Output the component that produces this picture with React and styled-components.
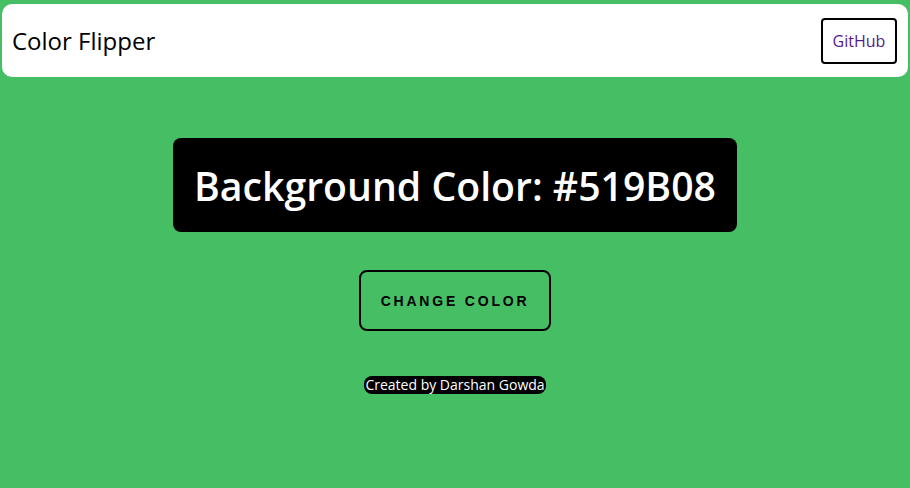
import React from "react";
import styled, { createGlobalStyle } from "styled-components";

const GlobalStyle = createGlobalStyle`
  html, body {
    margin: 0;
    padding: 0;
    background: #46be63;
    font-family: "Open Sans", sans-serif;
  }
`;

const Page = styled.div`
  min-height: 488px;
  padding: 4px 2px 0;
  box-sizing: border-box;
  display: flex;
  flex-direction: column;
  align-items: center;
`;

const Nav = styled.nav`
  align-self: stretch;
  height: 73px;
  background: #fff;
  border-radius: 10px;
  display: flex;
  align-items: center;
  justify-content: space-between;
  padding: 0 11px 0 10px;
`;

const Brand = styled.h1`
  margin: 0;
  font-size: 24px;
  font-weight: 400;
  color: #000;
`;

const GitLink = styled.a`
  display: flex;
  align-items: center;
  justify-content: center;
  width: 72px;
  height: 42px;
  border: 2px solid #000;
  border-radius: 4px;
  color: #551a8b;
  font-size: 16px;
  text-decoration: none;
`;

const ColorBox = styled.h2`
  margin: 61px 0 0;
  padding: 0 21px;
  height: 94px;
  display: flex;
  align-items: center;
  background: #000;
  color: #fff;
  border-radius: 8px;
  font-size: 39.2px;
  font-weight: 600;
`;

const ChangeBtn = styled.button`
  margin-top: 38px;
  width: 192px;
  height: 61px;
  background: transparent;
  border: 2px solid #000;
  border-radius: 8px;
  font-family: "Liberation Sans", Arial, sans-serif;
  font-size: 14px;
  font-weight: 700;
  letter-spacing: 2.8px;
  color: #000;
  cursor: pointer;
`;

const Credit = styled.p`
  margin: 45px 0 0;
  padding: 0 1px;
  background: #000;
  color: #fff;
  border-radius: 8px;
  font-size: 14px;
  line-height: 18px;
`;

export default function App() {
  return (
    <>
      <GlobalStyle />
      <Page>
        <Nav>
          <Brand>Color Flipper</Brand>
          <GitLink href="#">GitHub</GitLink>
        </Nav>
        <ColorBox>Background Color: #519B08</ColorBox>
        <ChangeBtn>CHANGE COLOR</ChangeBtn>
        <Credit>Created by Darshan Gowda</Credit>
      </Page>
    </>
  );
}
